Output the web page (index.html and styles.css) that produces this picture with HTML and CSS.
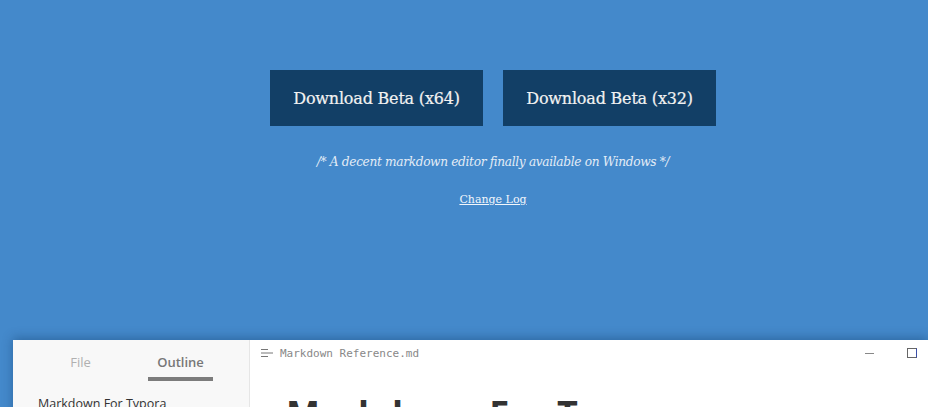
FILE: index.html
```html
<!DOCTYPE html>
<html>
<head>
<meta charset="utf-8">
<link rel="stylesheet" href="styles.css">
</head>
<body>
<div class="page">
  <section class="hero">
    <div class="buttons">
      <a class="btn">Download Beta (x64)</a>
      <a class="btn">Download Beta (x32)</a>
    </div>
    <p class="tagline">/* A decent markdown editor finally available on Windows */</p>
    <a class="changelog">Change Log</a>
  </section>
  <div class="window">
    <aside class="sidebar">
      <div class="tabs">
        <span class="tab">File</span>
        <span class="tab active">Outline</span>
      </div>
      <div class="outline-item">Markdown For Typora</div>
    </aside>
    <main class="editor">
      <div class="titlebar">
        <svg class="menu-icon" width="12" height="10" viewBox="0 0 12 10"><path d="M0 1.5h7M0 5h12M0 8.5h7" stroke="#777" stroke-width="1" fill="none"/></svg>
        <span class="filename">Markdown Reference.md</span>
        <span class="controls">
          <span class="min"></span>
          <span class="max"></span>
        </span>
      </div>
      <h1 class="doc-title">Markdown For Typora</h1>
    </main>
  </div>
</div>
</body>
</html>
```
FILE: styles.css
```css
html, body {
  margin: 0;
  padding: 0;
  height: 100%;
  overflow: hidden;
}
body {
  background: #4489cb;
}
.page {
  display: flex;
  flex-direction: column;
  height: 407px;
}
.hero {
  display: flex;
  flex-direction: column;
  align-items: center;
  padding-top: 70px;
  padding-left: 58px;
  height: 340px;
  flex: none;
  box-sizing: border-box;
}
.buttons {
  display: flex;
  gap: 20px;
}
.btn {
  display: flex;
  align-items: center;
  justify-content: center;
  width: 213px;
  height: 56px;
  background: #123f66;
  color: #f2f2f2;
  font-family: "DejaVu Serif", serif;
  font-size: 16px;
  letter-spacing: -0.2px;
  -webkit-text-stroke: 0.2px #f2f2f2;
}
.tagline {
  margin: 27px 0 0;
  color: #e3ecf6;
  font-family: "DejaVu Serif", serif;
  font-style: italic;
  font-size: 12.2px;
  letter-spacing: -0.35px;
  line-height: 18px;
}
.changelog {
  margin-top: 20px;
  color: #f2f6fb;
  font-family: "DejaVu Serif", serif;
  font-size: 11px;
  text-decoration: underline;
  line-height: 18px;
}
.window {
  flex: 1;
  margin-left: 13px;
  display: flex;
  background: #fff;
  box-shadow: 0 -2px 10px rgba(0, 40, 80, 0.35);
}
.sidebar {
  width: 236px;
  background: #f8f8f8;
  border-right: 1px solid #e6e6e6;
  font-family: "Open Sans", sans-serif;
}
.tabs {
  display: flex;
  gap: 35px;
  padding-top: 13px;
  padding-left: 35px;
}
.tab {
  font-size: 13px;
  color: #b0b0b0;
  width: 65px;
  text-align: center;
  padding-bottom: 6px;
  line-height: 18px;
  border-bottom: 4px solid transparent;
}
.tab.active {
  color: #777;
  font-weight: 600;
  border-bottom-color: #7c7c7c;
}
.outline-item {
  margin-top: 14px;
  padding-left: 25px;
  font-size: 12.5px;
  color: #333;
}
.editor {
  flex: 1;
}
.titlebar {
  display: flex;
  align-items: center;
  height: 26px;
  padding-left: 11px;
}
.menu-icon {
  margin-right: 7px;
}
.filename {
  font-family: "DejaVu Sans Mono", monospace;
  font-size: 11px;
  color: #888;
}
.controls {
  margin-left: auto;
  display: flex;
  align-items: center;
  gap: 33px;
  padding-right: 11px;
}
.min {
  width: 9px;
  height: 1px;
  background: #888;
}
.max {
  width: 8px;
  height: 8px;
  border: 1px solid #666;
  border-right-color: #3b4fa8;
}
.doc-title {
  margin: 26px 0 0 36px;
  font-family: "Open Sans", sans-serif;
  font-size: 36px;
  font-weight: 700;
  color: #333;
  line-height: 44px;
}
```
